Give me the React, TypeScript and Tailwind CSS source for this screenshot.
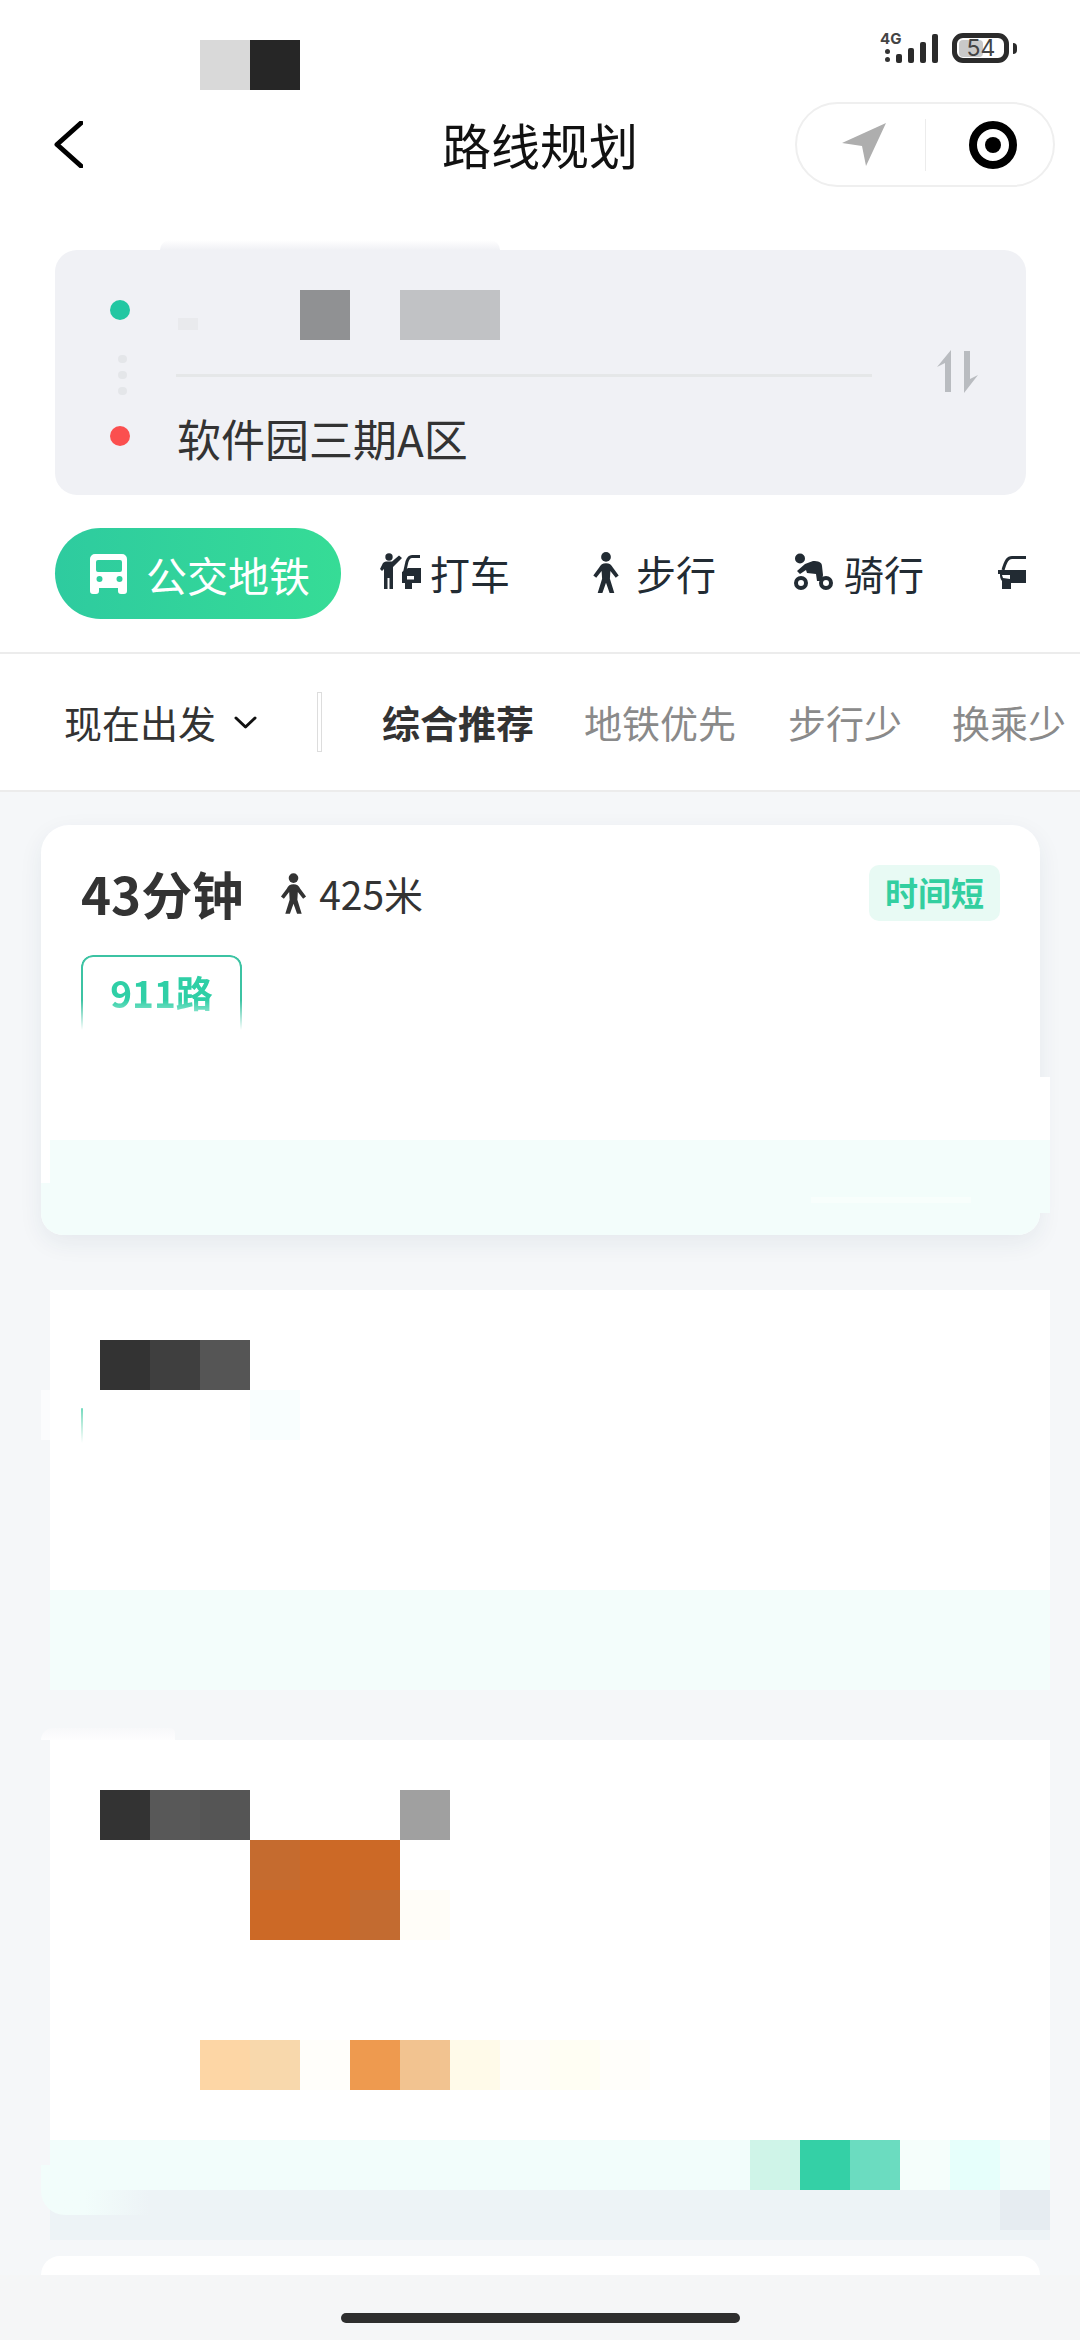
import React from 'react'

function WalkIcon({ className }: { className?: string }) {
  return (
    <svg viewBox="0 0 28 42" className={className} fill="currentColor">
      <circle cx="14" cy="5" r="5" />
      <path d="M14 11.500c-3.500 0-5.500 1.500-7 4.500L1 24l3 2.500 5.500-7 .5 8L5.500 42h4.800L14 31.500 17.700 42h4.800L18 27.500l.5-8 5.500 7 3-2.500-6-8c-1.500-3-3.500-4.500-7-4.500z" />
    </svg>
  )
}

function BikeIcon({ className }: { className?: string }) {
  return (
    <svg viewBox="0 0 60 50" className={className}>
      <circle cx="15" cy="10.500" r="5" fill="currentColor" />
      <path d="M12 23l8-7 8-3c5 0 9 1 9 5l1 9-1 6h-5l-1-7-9-1-1-3-6 4z" fill="currentColor" />
      <circle cx="16" cy="35" r="5" fill="none" stroke="currentColor" strokeWidth="4" />
      <circle cx="41" cy="35" r="5" fill="none" stroke="currentColor" strokeWidth="4" />
    </svg>
  )
}

function TaxiIcon({ className }: { className?: string }) {
  return (
    <svg viewBox="0 0 60 50" className={className}>
      <circle cx="14" cy="9" r="3.700" fill="currentColor" />
      <path d="M5 21l3-6c1-1 2-1.500 3-1.500h6l7-6 3 2.500-9 9V41h-3.500V30h-2v11H9V21l-2 2z" fill="currentColor" />
      <path d="M45 8.500h-8c-3 0-4 2-5 5l-2.500 11" fill="none" stroke="currentColor" strokeWidth="3" />
      <path d="M27 24l6-4h13v15h-9v6h-7v-6h-3z" fill="currentColor" />
      <path d="M32 28h7v3.500h-7z" fill="#fff" />
    </svg>
  )
}

function CarIcon({ className }: { className?: string }) {
  return (
    <svg viewBox="0 0 60 50" className={className}>
      <path d="M41 9.500H27c-4 0-6 2.500-9 12.500" fill="none" stroke="currentColor" strokeWidth="3" />
      <path d="M13 22h28v13H26v6h-9v-8c-2-2-2-5-2-7h-2z" fill="currentColor" />
      <path d="M17 27h8v4l-7-1z" fill="#fff" />
    </svg>
  )
}

function BusIcon({ className }: { className?: string }) {
  return (
    <svg viewBox="0 0 60 50" className={className}>
      <path
        fill="#fff"
        fillRule="evenodd"
        d="M15 5h27a5 5 0 0 1 5 5v32a3 3 0 0 1-3 3h-3a3 3 0 0 1-3-3v-3H19v3a3 3 0 0 1-3 3h-3a3 3 0 0 1-3-3V10a5 5 0 0 1 5-5zM18 11a2 2 0 0 0-2 2v8a2 2 0 0 0 2 2h22a2 2 0 0 0 2-2v-8a2 2 0 0 0-2-2zM19.500 27a3 3 0 1 0 0 6 3 3 0 0 0 0-6zM39.500 27a3 3 0 1 0 0 6 3 3 0 0 0 0-6z"
      />
    </svg>
  )
}

export default function App() {
  return (
    <div className="w-[1080px] h-[2340px] overflow-hidden bg-white flex flex-col font-['Noto_Sans_CJK_SC','Noto_Sans',sans-serif] text-[#333]">
      {/* status bar */}
      <div className="h-[102px] flex justify-between shrink-0">
        <div className="flex ml-[200px] mt-[40px] h-[50px]">
          <div className="w-[50px] bg-[#d9d9d9]" />
          <div className="w-[50px] bg-[#262626]" />
        </div>
        <div className="flex items-start mt-[33px] mr-[63px]">
          <div className="w-[15px] h-[30px] flex flex-col justify-end pb-[1px] items-start relative">
            <span className="absolute left-[-1px] top-0 text-[15px] leading-[11px] font-bold text-[#444] font-['Inter',sans-serif]">4G</span>
            <div className="w-[5px] h-[5px] ml-[4px] mb-[3px] rounded-full bg-[#333]" />
            <div className="w-[5px] h-[5px] ml-[4px] rounded-full bg-[#333]" />
          </div>
          <div className="flex items-end h-[30px] gap-[6px] mr-[14px]">
            <div className="w-[6px] h-[9px] rounded-[2px] bg-[#2b2b2b]" />
            <div className="w-[6px] h-[15px] rounded-[2px] bg-[#2b2b2b]" />
            <div className="w-[6px] h-[21px] rounded-[2px] bg-[#2b2b2b]" />
            <div className="w-[6px] h-[29px] rounded-[2px] bg-[#2b2b2b]" />
          </div>
          <div className="w-[57px] h-[30px] rounded-[11px] border-[5px] border-[#2b2b2b] flex items-center relative">
            <div className="w-[24px] h-[17px] ml-[2px] rounded-[4px] bg-[#c9c9c9]" />
            <span className="absolute left-[8px] top-0 w-[32px] text-center text-[23px] leading-[20px] text-[#444] font-['Inter',sans-serif]">54</span>
          </div>
          <div className="w-[4px] h-[11px] mt-[10px] ml-[4px] rounded-r-full bg-[#2b2b2b]" />
        </div>
      </div>

      {/* title bar */}
      <div className="h-[85px] shrink-0 flex items-center">
        <svg viewBox="0 0 29 47" className="w-[29px] h-[47px] ml-[54px] shrink-0" fill="none" stroke="#000" strokeWidth="5" strokeLinecap="round" strokeLinejoin="round">
          <path d="M27 2 3 23.500 27 45" />
        </svg>
        <h1 className="w-[200px] ml-[357px] shrink-0 text-center text-[49px] leading-[60px] font-normal text-[#111] -mt-[2px]">路线规划</h1>
        <div className="ml-[155px] w-[260px] h-[85px] shrink-0 rounded-full border-2 border-[#efefef] flex items-center">
          <svg viewBox="0 0 44 43" className="w-[44px] h-[43px] ml-[45px] shrink-0">
            <path d="M44 0 0 20l20 3 4 20z" fill="#aeaeae" />
          </svg>
          <div className="w-[1px] h-[52px] bg-[#ececec] ml-[39px] shrink-0" />
          <div className="w-[48px] h-[48px] ml-[43px] shrink-0 rounded-full border-[8px] border-black flex items-center justify-center">
            <div className="w-[16px] h-[16px] rounded-full bg-black" />
          </div>
        </div>
      </div>

      {/* route inputs */}
      <div className="w-[340px] h-[10px] ml-[160px] mt-[53px] shrink-0 rounded-t-xl bg-gradient-to-b from-white to-[#f0f1f5]" />
      <div className="mx-[55px] w-[971px] h-[245px] shrink-0 rounded-[22px] bg-[#f0f1f5] pt-[40px] flex flex-col">
        <div className="h-[50px] flex items-start shrink-0">
          <div className="w-[20px] h-[20px] ml-[55px] mt-[10px] shrink-0 rounded-full bg-[#22c7a2]" />
          <div className="w-[20px] h-[12px] ml-[48px] mt-[28px] shrink-0 bg-[#e9eaed]" />
          <div className="w-[50px] h-[50px] ml-[102px] shrink-0 bg-[#909193]" />
          <div className="w-[100px] h-[50px] ml-[50px] shrink-0 bg-[#c1c2c5]" />
        </div>
        <div className="h-[70px] flex items-center shrink-0">
          <div className="flex flex-col gap-[8px] ml-[63px]">
            <div className="w-[9px] h-[8px] rounded-full bg-[#e4e6e9]" />
            <div className="w-[9px] h-[8px] rounded-full bg-[#e4e6e9]" />
            <div className="w-[9px] h-[8px] rounded-full bg-[#e4e6e9]" />
          </div>
          <div className="w-[696px] h-[3px] ml-[49px] bg-[#e5e7e8]" />
          <svg viewBox="0 0 41 43" className="w-[41px] h-[43px] ml-[65px] -mt-[8px]" fill="#b9bcc0">
            <path d="M14 0v42H8V13l-8 4zM27 1h6v28l8-4-14 18z" />
          </svg>
        </div>
        <div className="h-[60px] flex items-start shrink-0">
          <div className="w-[20px] h-[20px] ml-[55px] mt-[16px] shrink-0 rounded-full bg-[#fb4f4f]" />
          <span className="ml-[47px] -mt-[2px] text-[44px] leading-[60px] text-[#333]">软件园三期A区</span>
        </div>
      </div>

      {/* travel modes */}
      <div className="h-[159px] shrink-0 flex items-start overflow-hidden border-b-2 border-[#ececec] text-[#222b33]">
        <div className="ml-[55px] mt-[33px] w-[286px] h-[91px] rounded-full bg-gradient-to-r from-[#2ecb9f] to-[#36dc96] flex items-center text-white shrink-0">
          <BusIcon className="w-[60px] h-[50px] ml-[25px] shrink-0" />
          <span className="ml-[6px] text-[41px] leading-[50px] shrink-0">公交地铁</span>
        </div>
        <TaxiIcon className="w-[60px] h-[50px] ml-[34px] mt-[53px] shrink-0" />
        <span className="-ml-[5px] mt-[53px] text-[40px] leading-[50px] shrink-0">打车</span>
        <WalkIcon className="w-[28px] h-[41px] ml-[82px] mt-[57px] shrink-0" />
        <span className="ml-[16px] mt-[53px] text-[40px] leading-[50px] shrink-0">步行</span>
        <BikeIcon className="w-[60px] h-[50px] ml-[69px] mt-[53px] shrink-0" />
        <span className="-ml-[1px] mt-[53px] text-[40px] leading-[50px] shrink-0">骑行</span>
        <CarIcon className="w-[60px] h-[50px] ml-[61px] mt-[53px] shrink-0" />
      </div>

      {/* sort filters */}
      <div className="h-[138px] shrink-0 flex items-center overflow-hidden border-b-2 border-[#ececec] text-[38px] whitespace-nowrap">
        <span className="ml-[64px] leading-[50px] shrink-0">现在出发</span>
        <svg viewBox="0 0 23 13" className="w-[23px] h-[13px] ml-[18px] shrink-0" fill="none" stroke="#111" strokeWidth="3" strokeLinecap="round" strokeLinejoin="round">
          <path d="M2 2l9.500 9L21 2" />
        </svg>
        <div className="w-[5px] h-[60px] ml-[60px] shrink-0 bg-white border border-[#ddd]" />
        <span className="ml-[60px] font-bold leading-[50px] text-[#333] shrink-0">综合推荐</span>
        <span className="ml-[50px] leading-[50px] text-[#8a8a8a] shrink-0">地铁优先</span>
        <span className="ml-[52px] leading-[50px] text-[#8a8a8a] shrink-0">步行少</span>
        <span className="ml-[50px] leading-[50px] text-[#8a8a8a] shrink-0">换乘少</span>
      </div>

      {/* route results */}
      <div className="flex-1 min-h-0 bg-[#f5f7f9] flex flex-col overflow-hidden">
        <div className="w-[999px] h-[410px] shrink-0 ml-[41px] mt-[33px] rounded-t-[28px] rounded-b-[22px] bg-white flex flex-col shadow-[0_8px_24px_rgba(30,50,80,0.07)]">
          <div className="h-[252px] shrink-0 pl-[40px] flex flex-col">
            <div className="flex items-center mt-[38px] h-[60px] shrink-0">
              <span className="text-[51px] leading-[60px] font-bold text-[#333]">43分钟</span>
              <WalkIcon className="w-[27px] h-[41px] ml-[37px] text-[#333]" />
              <span className="ml-[12px] text-[39px] leading-[50px] text-[#333]">425米</span>
              <div className="ml-auto mr-[40px] w-[131px] h-[56px] rounded-[10px] bg-[#e8faf4] flex items-center justify-center text-[33px] font-bold text-[#33cfa0]">时间短</div>
            </div>
            <div className="mt-[32px] w-[161px] h-[75px] shrink-0 rounded-t-[12px] border-x-2 border-t-2 border-[#3cc3a3] flex items-start justify-center text-[37px] leading-[50px] pt-[10px] font-bold text-[#2fcfa6] [mask-image:linear-gradient(#000_60%,transparent)]">911路</div>
          </div>
          <div className="h-[63px] shrink-0 -mr-[10px] bg-white" />
          <div className="h-[43px] shrink-0 ml-[9px] -mr-[10px] bg-[#f3fdfb]" />
          <div className="h-[30px] shrink-0 -mr-[10px] bg-[#f3fdfb] flex">
            <div className="w-[160px] h-[6px] ml-[770px] mt-[14px] bg-white/40" />
          </div>
          <div className="h-[22px] shrink-0 rounded-b-[22px] bg-[#f3fdfb]" />
        </div>

        <div className="w-[1000px] h-[300px] shrink-0 ml-[50px] mt-[55px] bg-white flex flex-col">
          <div className="flex h-[50px] ml-[50px] mt-[50px] shrink-0">
            <div className="w-[50px] bg-[#333]" />
            <div className="w-[50px] bg-[#3f3f3f]" />
            <div className="w-[50px] bg-[#555]" />
          </div>
          <div className="flex h-[50px] shrink-0">
            <div className="w-[9px] -ml-[9px] bg-[#fbfcfd]" />
            <div className="w-[2px] h-[35px] ml-[31px] mt-[18px] rounded-t-full bg-gradient-to-b from-[#6fd9bd] to-white" />
            <div className="w-[50px] ml-[167px] bg-[#f9fefe]" />
          </div>
        </div>
        <div className="w-[1000px] h-[100px] shrink-0 ml-[50px] bg-[#f3fdfb]" />

        <div className="w-[134px] h-[12px] shrink-0 ml-[41px] mt-[38px] rounded-tl-[24px] rounded-tr-[10px] bg-gradient-to-b from-[#f7f8fa] to-[#fdfdfe]" />
        <div className="w-[1000px] h-[400px] shrink-0 ml-[50px] bg-white flex flex-col">
          <div className="flex h-[50px] ml-[50px] mt-[50px] shrink-0">
            <div className="w-[50px] bg-[#333]" />
            <div className="w-[50px] bg-[#585858]" />
            <div className="w-[50px] bg-[#555]" />
            <div className="w-[150px]" />
            <div className="w-[50px] bg-[#a0a0a0]" />
          </div>
          <div className="flex h-[50px] ml-[200px] shrink-0">
            <div className="w-[50px] bg-[#c56b2f]" />
            <div className="w-[100px] bg-[#cc6926]" />
          </div>
          <div className="flex h-[50px] ml-[200px] shrink-0">
            <div className="w-[100px] bg-[#cc6926]" />
            <div className="w-[50px] bg-[#c36b30]" />
            <div className="w-[50px] bg-[#fffdf8]" />
          </div>
          <div className="flex h-[50px] ml-[150px] mt-[100px] shrink-0">
            <div className="w-[50px] bg-[#fdd6a5]" />
            <div className="w-[50px] bg-[#f8d8ac]" />
            <div className="w-[50px] bg-[#fffefa]" />
            <div className="w-[50px] bg-[#ee9a4f]" />
            <div className="w-[50px] bg-[#f2c390]" />
            <div className="w-[50px] bg-[#fffae9]" />
            <div className="w-[50px] bg-[#fffdf7]" />
            <div className="w-[50px] bg-[#fffef3]" />
            <div className="w-[50px] bg-[#fffefa]" />
          </div>
        </div>
        <div className="flex h-[50px] w-[1000px] ml-[50px] shrink-0 bg-[#f2fdfb]">
          <div className="w-[9px] h-[25px] -ml-[9px] mt-[25px] bg-[#f2fdfb]" />
          <div className="w-[50px] ml-[700px] bg-[#cff4e8]" />
          <div className="w-[50px] bg-[#34d0a6]" />
          <div className="w-[50px] bg-[#6bdcc0]" />
          <div className="w-[50px] bg-[#f5fefb]" />
          <div className="w-[50px] bg-[#e6fffb]" />
        </div>
        <div className="flex h-[50px] w-[1000px] ml-[50px] shrink-0 bg-[#edf3f6]">
          <div className="w-[109px] h-[25px] -ml-[9px] rounded-bl-[24px] bg-gradient-to-r from-[#f2fdfb] from-40% to-[#edf3f6]" />
          <div className="w-[50px] h-[40px] ml-auto bg-[#e6ecf1]" />
        </div>
        <div className="w-[999px] h-[19px] shrink-0 ml-[41px] mt-[16px] rounded-t-[28px] bg-white" />

        {/* home indicator */}
        <div className="flex-1 min-h-0 bg-[#f5f6f7] flex justify-center">
          <div className="w-[399px] h-[10px] mt-[38px] rounded-full bg-[#2e2e2e]" />
        </div>
      </div>
    </div>
  )
}
